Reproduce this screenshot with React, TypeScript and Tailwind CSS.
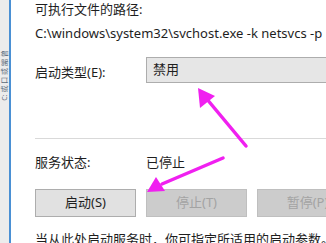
import React from "react";

export default function App() {
  const font = { fontFamily: '"Noto Sans", "Noto Sans CJK SC", sans-serif' };
  return (
    <div
      className="relative flex h-[243px] w-[326px] overflow-hidden bg-white text-[13px] text-[#1e1e1e]"
      style={font}
    >
      {/* left strip */}
      <div className="relative flex h-full w-[9px] shrink-0 flex-col items-center bg-[#ececec]">
        <div className="mt-[20px] flex h-[110px] w-[9px] items-center justify-center overflow-hidden">
          <span className="block -rotate-90 whitespace-nowrap text-[7px] leading-none text-[#5a6a7a]">
            C: 或 口 或 嘂 曾
          </span>
        </div>
      </div>
      <div className="h-full w-[2px] shrink-0 bg-[#4a90d4]" />
      {/* main */}
      <div className="flex min-w-0 flex-1 flex-col">
        <div className="h-[4px] w-full bg-[#4a4a4a]" />
        <div className="flex flex-col pl-[24px]">
          <div className="h-[18px] whitespace-nowrap leading-[18px]">可执行文件的路径:</div>
          <div className="mt-[6px] h-[18px] whitespace-nowrap leading-[18px]">
            C:\windows\system32\svchost.exe -k netsvcs -p
          </div>
          <div className="mt-[15px] flex h-[26px] items-center">
            <div className="mt-[6px] w-[111px] shrink-0 whitespace-nowrap">启动类型(E):</div>
            <div className="flex h-[26px] flex-1 items-center border border-r-0 border-[#adadad] bg-[#e6e6e6] pl-[6px]">
              禁用
            </div>
          </div>
          <div className="mt-[55px] h-px bg-[#d9d9d9]" />
          <div className="mt-[16px] flex h-[16px] items-center whitespace-nowrap">
            <div className="w-[111px] shrink-0">服务状态:</div>
            <div>已停止</div>
          </div>
          <div className="mt-[18px] flex gap-[10px]">
            <div className="flex h-[28px] w-[101px] shrink-0 items-center justify-center border border-[#adadad] bg-[#e1e1e1]">
              启动(S)
            </div>
            <div className="flex h-[28px] w-[101px] shrink-0 items-center justify-center border border-[#bfbfbf] bg-[#cccccc] text-[#a3a3a3]">
              停止(T)
            </div>
            <div className="flex h-[28px] w-[101px] shrink-0 items-center justify-center border border-[#bfbfbf] bg-[#cccccc] text-[#a3a3a3]">
              暂停(P)
            </div>
          </div>
          <div className="mt-[13px] whitespace-nowrap leading-[18px]">
            当从此处启动服务时，你可指定所适用的启动参数。
          </div>
        </div>
      </div>
      {/* annotation arrows */}
      <svg className="pointer-events-none absolute left-0 top-0" width="326" height="243" viewBox="0 0 326 243">
        <line x1="246" y1="146" x2="206" y2="98" stroke="#f020f0" strokeWidth="3.5" strokeLinecap="round" />
        <polygon points="198,88 200,108 215,96" fill="#f020f0" />
        <line x1="223" y1="158" x2="162" y2="184" stroke="#f020f0" strokeWidth="3.5" strokeLinecap="round" />
        <polygon points="147,192 156,177 165,191" fill="#f020f0" />
      </svg>
    </div>
  );
}
